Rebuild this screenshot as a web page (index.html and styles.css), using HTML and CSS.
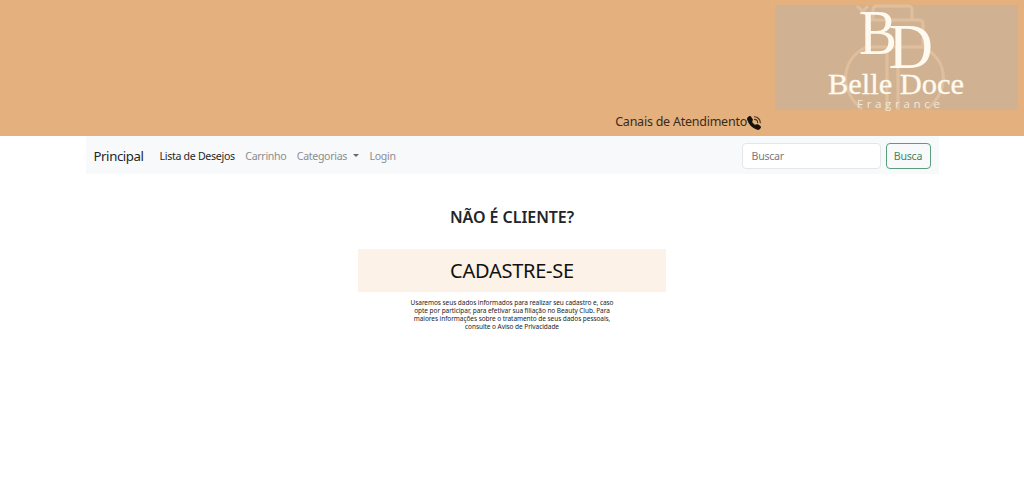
FILE: index.html
```html
<!DOCTYPE html>
<html lang="pt-BR">
<head>
<meta charset="utf-8">
<title>Belle Doce Fragrance</title>
<link rel="stylesheet" href="styles.css">
</head>
<body>
<header class="header">
  <a class="contact"><span class="contact-label">Canais de Atendimento</span><svg class="phone" viewBox="0 0 16 16" width="14" height="14"><path fill="#17110c" d="M1.9.5a1.8 1.8 0 0 1 2.6.2l1.8 2.3c.3.4.5 1 .3 1.6L6 6.8c0 .2 0 .5.2.6l2.400 2.400c.2.2.4.2.6.2l2.200-.6c.6-.1 1.100 0 1.600.3l2.300 1.800c.8.700.9 1.900.2 2.600l-1 1c-.800.800-1.900 1.100-2.900.7A17.600 17.600 0 0 1 .2 4.400C-.2 3.400.100 2.300.9 1.500z"/><path fill="none" stroke="#4a351f" stroke-width="1.300" stroke-linecap="round" d="M8.500 .9A6.700 6.700 0 0 1 15.200 7.600M8.500 3.900A3.700 3.700 0 0 1 12.200 7.600"/></svg></a>
  <svg class="logo" viewBox="0 0 243 105" width="243" height="105">
    <rect width="243" height="105" fill="#d0b292"/>
    <g class="bottle">
      <path d="M98 14V5q0-4 4-4h31q4 0 4 4v9M92 41V19q0-4 4-4h48q4 0 4 4v22M90 42h58M91 42C63 57 66 88 87 104M148 42c28 15 25 46 4 62M112 43v62M123 43v62M82 1l11 10M93 1l-8 8"/>
    </g>
    <g class="logo-text">
      <text class="mono" x="84" y="48.500" textLength="38" lengthAdjust="spacingAndGlyphs">B</text>
      <text class="mono" x="113.500" y="62.500" textLength="44.500" lengthAdjust="spacingAndGlyphs">D</text>
      <text class="brand" x="53" y="88.500" textLength="136" lengthAdjust="spacingAndGlyphs">Belle Doce</text>
      <text class="tagline" x="82" y="102.500" textLength="83">Fragrance</text>
    </g>
  </svg>
</header>
<nav class="navbar">
  <a class="brand-link">Principal</a>
  <div class="links">
    <a class="link active">Lista de Desejos</a>
    <a class="link">Carrinho</a>
    <a class="link dropdown">Categorias</a>
    <a class="link">Login</a>
  </div>
  <form class="search">
    <input class="search-input" type="search" placeholder="Buscar">
    <button class="search-button" type="button">Busca</button>
  </form>
</nav>
<main class="signup">
  <h1 class="title">NÃO É CLIENTE?</h1>
  <a class="register"><span class="register-label">CADASTRE-SE</span></a>
  <p class="notice">Usaremos seus dados informados para realizar seu cadastro e, caso<br>opte por participar, para efetivar sua filiação no Beauty Club. Para<br>maiores informações sobre o tratamento de seus dados pessoais,<br>consulte o Aviso de Privacidade</p>
</main>
</body>
</html>
```
FILE: styles.css
```css
* { box-sizing: border-box; }
body { margin: 0; background: #fff; color: #212529; font-family: "Noto Sans", "Open Sans", sans-serif; }
.header { height: 136px; background: #e4b17e; display: flex; justify-content: flex-end; align-items: flex-start; padding: 5px 6px 0 0; }
.contact { display: flex; align-items: center; height: 20px; margin: 106px 14px 0 0; color: #3b2a1d; }
.contact-label { font-size: 12.500px; letter-spacing: -.24px; white-space: nowrap; }
.phone { margin-top: 3px; }
.logo { display: block; overflow: visible; }
.bottle { fill: none; stroke: #e0bf9e; stroke-width: 3; }
.logo-text { fill: #fffaf0; font-family: "Liberation Serif", serif; }
.mono { font-size: 63px; }
.brand { font-size: 29.500px; stroke: #fffaf0; stroke-width: .3px; }
.tagline { font-family: "Open Sans", sans-serif; font-size: 11.500px; fill: #f6e6d2; }
.navbar { width: 853px; height: 38px; margin: 0 auto; background: #f7f9fb; display: flex; align-items: center; padding: 1px 8px 0; }
.brand-link { font-size: 13.200px; letter-spacing: -.4px; width: 66px; }
.links { display: flex; gap: 10.500px; flex: 1; font-size: 10.600px; letter-spacing: -.33px; }
.link { color: #8b8d90; white-space: nowrap; }
.active { color: #25282b; letter-spacing: -.3px; }
.dropdown::after { content: ""; display: inline-block; margin-left: 6px; vertical-align: 3px; border: 3px solid transparent; border-top-color: #66686a; border-bottom: 0; }
.search { display: flex; gap: 5px; }
.search-input, .search-button { height: 26px; border-radius: 4px; font-family: inherit; font-size: 10.600px; letter-spacing: -.25px; }
.search-input { width: 139px; border: 1px solid #e3e7ea; background: #fff; padding: 0 9px; outline: 0; }
.search-input::placeholder { color: #777b80; opacity: 1; }
.search-button { width: 45px; padding: 0; border: 1px solid #5b9e7e; background: transparent; color: #3f8565; }
.signup { width: 308px; margin: 0 auto; padding-top: 31px; text-align: center; }
.title { margin: 0; font-size: 16px; line-height: 24px; font-weight: 600; letter-spacing: -.05px; }
.register { display: flex; align-items: center; justify-content: center; height: 43px; margin-top: 20px; background: #fdf2e7; color: #111; font-size: 20px; }
.register-label { letter-spacing: -.25px; }
.notice { margin: 7px 0 0; font-size: 6.500px; line-height: 8px; letter-spacing: -.06px; white-space: nowrap; }
```
